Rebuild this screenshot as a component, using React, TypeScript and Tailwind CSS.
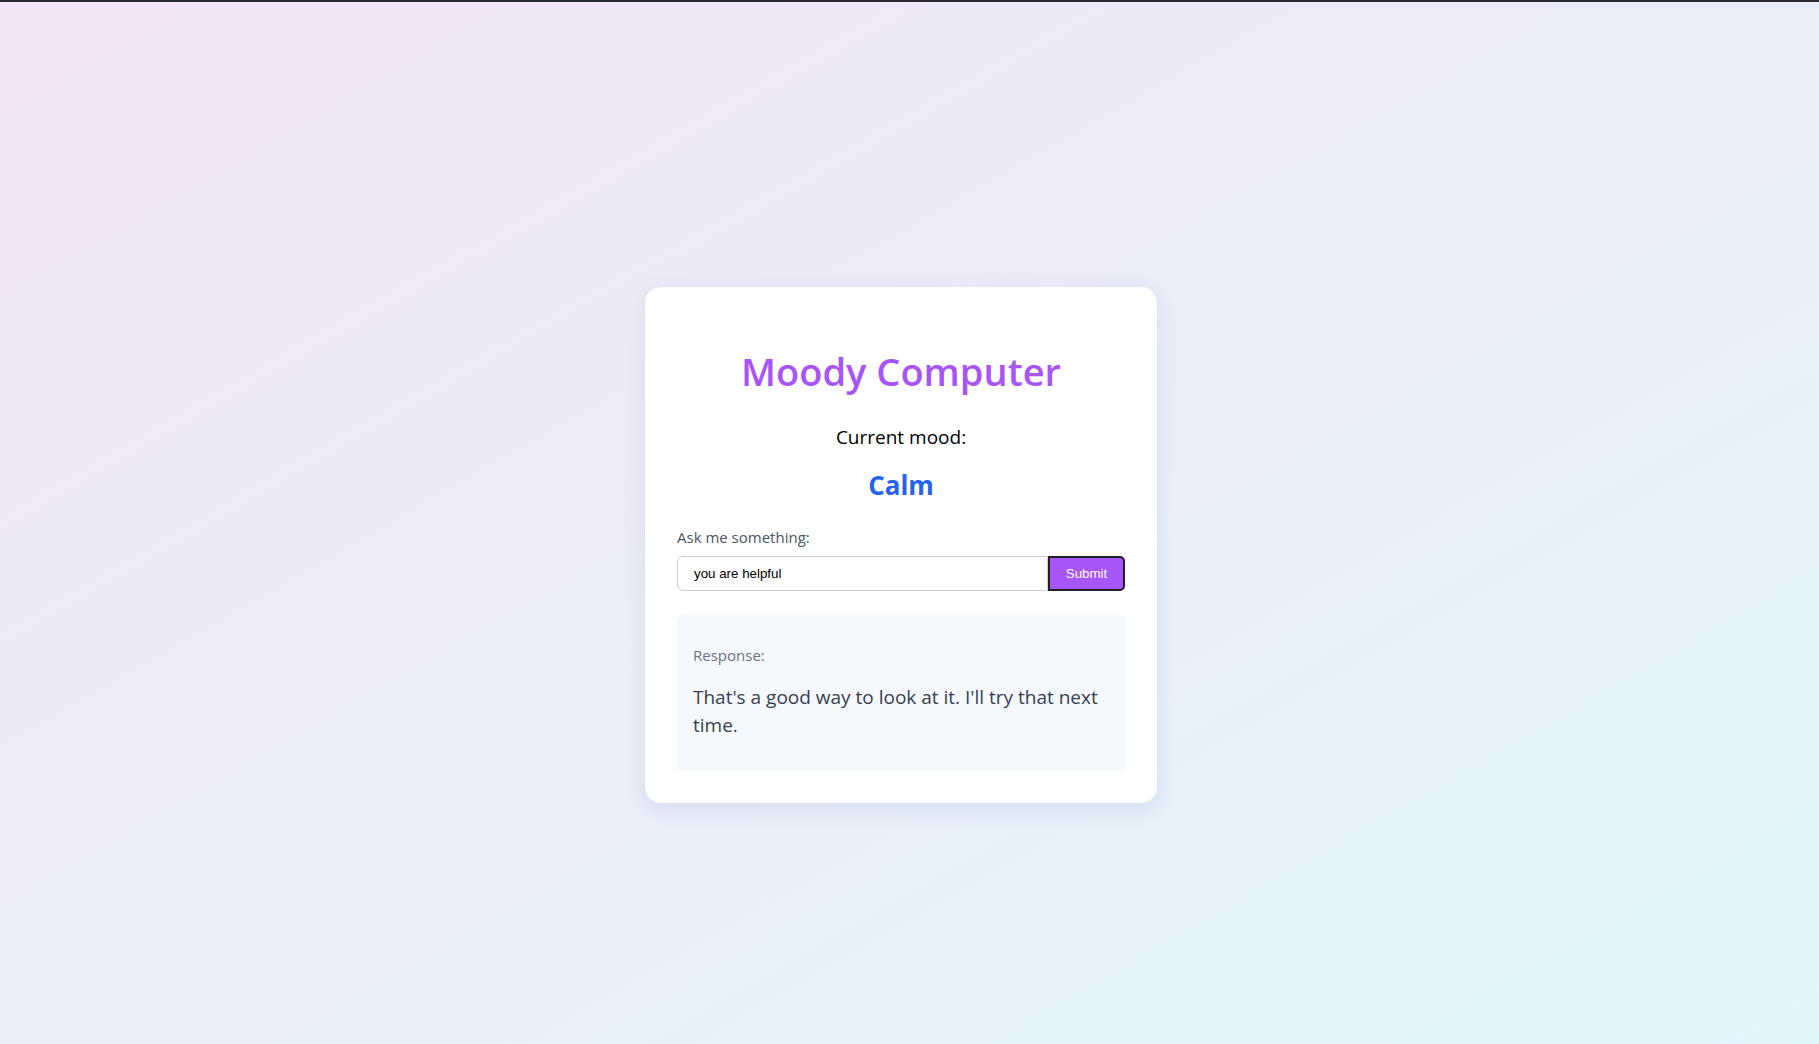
import React, { useState } from 'react'

const App = () => {
  const [question, setQuestion] = useState('you are helpful')

  return (
    <div className="min-h-screen flex flex-col bg-gradient-to-br from-[#f3e4f6] to-[#e0f6fd] font-['Open_Sans',sans-serif]">
      <div className="h-[2px] bg-[#2b2a33]" />
      <div className="flex justify-center pt-[285px] pb-16 pr-[17px]">
        {/* Card */}
        <div className="w-[512px] bg-white rounded-2xl shadow-[0_6px_20px_rgba(120,120,170,0.15)] p-8 flex flex-col">
          <h1 className="mt-8 text-center text-[38px] leading-10 font-semibold text-[#a855f7]">Moody Computer</h1>

          <p className="mt-8 text-center text-[19px] leading-7 text-black">Current mood:</p>
          <p className="mt-[18px] text-center text-[26px] leading-8 font-bold text-[#2563eb]">Calm</p>

          <label className="mt-6 text-[15px] leading-6 text-[#4b5563]">Ask me something:</label>
          <div className="mt-[7px] flex">
            <input
              autoFocus
              value={question}
              onChange={(e) => setQuestion(e.target.value)}
              className="flex-1 min-w-0 h-[35px] px-4 border border-[#c9cde0] rounded-l-md bg-white text-[13.33px] text-black font-['Liberation_Sans',Arial,sans-serif] outline-none"
            />
            <button className="w-[77px] h-[35px] bg-[#a855f7] border-2 border-[#1f1f24] rounded-r-[5px] text-[13.33px] text-white font-['Liberation_Sans',Arial,sans-serif]">
              Submit
            </button>
          </div>

          <div className="mt-6 bg-[#f5f8fc] rounded-md px-4 pt-7 pb-8">
            <p className="text-[15px] leading-6 text-[#6b7280]">Response:</p>
            <p className="mt-4 text-[19px] leading-7 text-[#374151]">That's a good way to look at it. I'll try that next time.</p>
          </div>
        </div>
      </div>
    </div>
  )
}

export default App
